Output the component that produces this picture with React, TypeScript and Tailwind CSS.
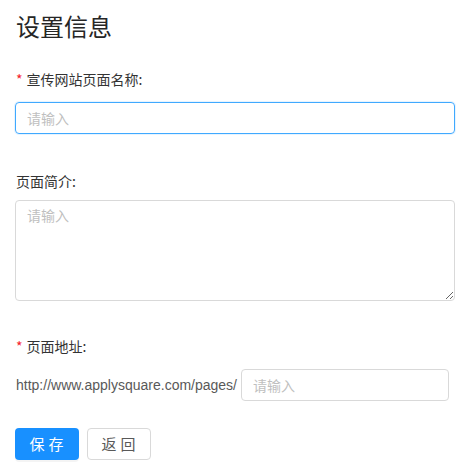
export default function App() {
  const font = { fontFamily: '"Noto Sans CJK SC", "Noto Sans", sans-serif' };
  return (
    <div className="min-h-screen bg-white pl-[15px] pt-[10px] text-[14px] text-[#333]" style={font}>
      <h1 className="h-[32px] pl-px text-[24px] leading-[32px] font-normal text-[#262626]">设置信息</h1>

      <div className="mt-[26px] flex h-[22px] items-center pl-px leading-[22px]">
        <span className="mr-[4px] text-[#f5222d]">*</span>
        <span>宣传网站页面名称:</span>
      </div>
      <input
        placeholder="请输入"
        className="mt-[12px] block h-[32px] w-[440px] rounded-[4px] border border-[#40a9ff] px-[11px] text-[14px] outline-none shadow-[0_0_0_1px_rgba(24,144,255,0.1)] placeholder:text-[#bfbfbf]"
      />

      <div className="mt-[36px] h-[22px] pl-px leading-[22px]">页面简介:</div>
      <textarea
        placeholder="请输入"
        className="mt-[8px] block h-[101px] w-[440px] rounded-[4px] border border-[#d9d9d9] px-[11px] py-[4px] text-[14px] outline-none placeholder:text-[#bfbfbf]"
      />

      <div className="mt-[34px] flex h-[22px] items-center pl-px leading-[22px]">
        <span className="mr-[4px] text-[#f5222d]">*</span>
        <span>页面地址:</span>
      </div>
      <div className="mt-[12px] flex h-[32px] items-center">
        <span className="w-[226px] pl-px text-[#595959]" style={{ fontFamily: '"Liberation Sans", Arial, sans-serif' }}>
          http://www.applysquare.com/pages/
        </span>
        <input
          placeholder="请输入"
          className="block h-[32px] w-[208px] rounded-[4px] border border-[#d9d9d9] px-[11px] text-[14px] outline-none placeholder:text-[#bfbfbf]"
          style={font}
        />
      </div>

      <div className="mt-[27px] flex gap-[8px]">
        <button className="h-[32px] w-[64px] rounded-[4px] bg-[#1890ff] pl-[3px] text-[15px] tracking-[4px] text-white shadow-[0_2px_0_rgba(0,0,0,0.045)]">
          保存
        </button>
        <button className="h-[32px] w-[64px] rounded-[4px] border border-[#d9d9d9] bg-white pl-[3px] text-[15px] tracking-[4px] text-[#595959]">
          返回
        </button>
      </div>
    </div>
  );
}
